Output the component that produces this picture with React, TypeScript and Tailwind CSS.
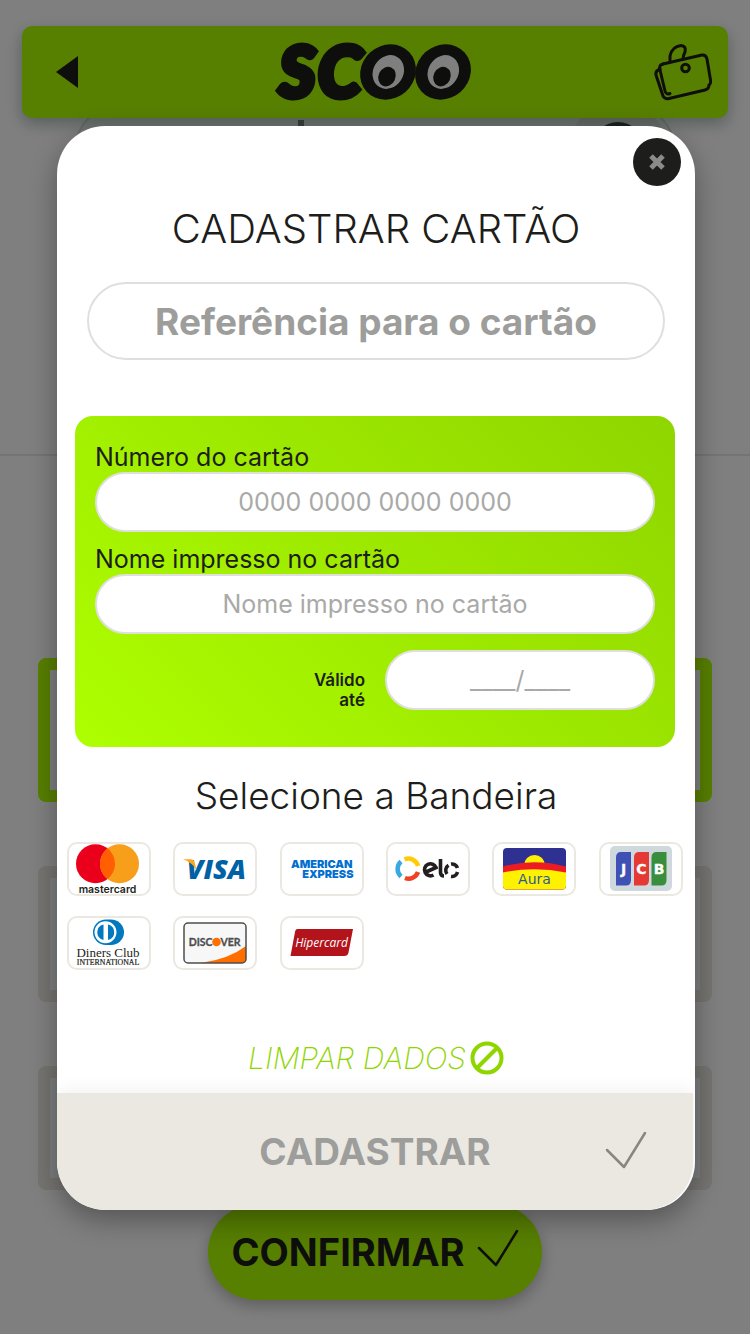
import type { ReactNode } from "react";

const sans = "font-['Inter','Liberation_Sans',sans-serif]";

function ScooLogo() {
  return (
    <svg viewBox="0 -14 200 92" className="h-[92px] w-[200px]" role="img" aria-label="SCOO">
      <g fill="#1d1d1b" fontFamily="Lato, sans-serif" fontWeight="900" fontStyle="italic" fontSize="70" stroke="#1d1d1b" strokeWidth="6">
        <text x="5" y="57">S</text>
        <text x="44" y="57">C</text>
      </g>
      <ellipse cx="114" cy="32" rx="29" ry="26.500" transform="rotate(-42 114 32)" fill="#1d1d1b" />
      <ellipse cx="169" cy="32" rx="29" ry="26.500" transform="rotate(-42 169 32)" fill="#1d1d1b" />
      <ellipse cx="114.300" cy="32" rx="17.500" ry="15" transform="rotate(-58 114.300 32)" fill="#fff" />
      <ellipse cx="169.300" cy="32" rx="17.500" ry="15" transform="rotate(-58 169.300 32)" fill="#fff" />
      <ellipse cx="113" cy="36.600" rx="10" ry="8.500" transform="rotate(-65 113 36.600)" fill="#1d1d1b" />
      <ellipse cx="168" cy="36.600" rx="10" ry="8.500" transform="rotate(-65 168 36.600)" fill="#1d1d1b" />
    </svg>
  );
}

function WalletIcon() {
  return (
    <svg viewBox="0 0 60 60" className="h-15 w-15" fill="none" stroke="#1d1d1b" strokeWidth="3" strokeLinecap="round" strokeLinejoin="round" aria-hidden="true">
      <path d="M11 22 50 13Q54 12.500 55 17L58.500 38Q59 42 57 43M57 43Q57 47 53 48L17 56.500Q13 57.500 11 54L4 33Q3 29 8 27" />
      <path d="M11 22Q6.500 23 8 28L13 49Q14 53 18 51.500" />
      <path d="M18 20V14Q20 4.500 29 3.500Q34.500 4 33 10Q31 14 31 17" />
      <circle cx="33.500" cy="26" r="3.800" />
    </svg>
  );
}

function Check({ className }: { className: string }) {
  return (
    <svg viewBox="0 0 42 38" className={className} fill="none" stroke="currentColor" strokeWidth="2.500" strokeLinecap="round" strokeLinejoin="round" aria-hidden="true">
      <path d="M2 19 19 36 40 2" />
    </svg>
  );
}

const brands: { id: string; art: ReactNode }[] = [
  {
    id: "Mastercard",
    art: (
      <>
        <circle cx="28.500" cy="21.700" r="19.500" fill="#eb001b" />
        <circle cx="52.500" cy="21.700" r="19.500" fill="#f79e1b" />
        <path d="M40.500 6.300a19.500 19.500 0 0 1 0 30.800a19.500 19.500 0 0 1 0-30.800Z" fill="#ff5f00" />
        <text x="40.500" y="50.500" textAnchor="middle" fontSize="10.500" fontWeight="600" fontFamily="Inter, sans-serif" fill="#231f20">mastercard</text>
      </>
    ),
  },
  {
    id: "Visa",
    art: (
      <>
        <text x="73" y="37" textAnchor="end" fontSize="27" fontWeight="800" fontStyle="italic" fontFamily="'Open Sans', sans-serif" fill="#0061a5">VISA</text>
        <path d="M10 17.300H18Q21 17.500 21.500 20L23.500 28Q19 20.500 10 17.300Z" fill="#f9a81d" />
      </>
    ),
  },
  {
    id: "American Express",
    art: (
      <g fontSize="11" fontWeight="900" fontFamily="Inter, sans-serif" fill="#016fd0">
        <text x="72.500" y="25.500" textAnchor="end">AMERICAN</text>
        <text x="73.500" y="35.500" textAnchor="end">EXPRESS</text>
      </g>
    ),
  },
  {
    id: "Elo",
    art: (
      <>
        <g fill="none" strokeWidth="4.500">
          <path d="M18.500 17.400A10 10 0 0 1 32 24" stroke="#ffcb05" />
          <path d="M32 30A10 10 0 0 1 19 36" stroke="#ef4123" />
          <path d="M15 34.500A10 10 0 0 1 15 19.500" stroke="#38a8e0" />
        </g>
        <g fill="none" stroke="#231f20" strokeWidth="3.600">
          <path d="M39 30.500 50 25.500A6 6 0 1 0 47.500 33" />
          <path d="M54.500 17V31Q55 34 58 34" />
          <path d="M61 32A6 6 0 0 1 62.500 23.200M65 22A6 6 0 0 1 71.500 26M71.500 30A6 6 0 0 1 65 34.500" />
        </g>
      </>
    ),
  },
  {
    id: "Aura",
    art: (
      <>
        <clipPath id="aura-card"><rect x="11" y="6" width="63" height="41.500" rx="4" /></clipPath>
        <g clipPath="url(#aura-card)">
          <rect x="11" y="6" width="63" height="42" fill="#2e3192" />
          <circle cx="42.500" cy="23.500" r="10.500" fill="#fff200" />
          <path d="M11 24.500Q42 16 74 24.500V48H11Z" fill="#ed1c24" />
          <path d="M11 30.500Q42 24 74 30.500V48H11Z" fill="#fff200" />
        </g>
        <text x="42.500" y="41.500" textAnchor="middle" fontSize="14" fontFamily="'DejaVu Sans', sans-serif" fill="#2e5a9a">Aura</text>
      </>
    ),
  },
  {
    id: "JCB",
    art: (
      <>
        <rect x="11" y="4" width="62" height="45" rx="5" fill="#cfd8dc" />
        <path d="M22 10h10v28q0 5.500-5 5.500H17V15.500q0-5.500 5-5.500Z" fill="#3f51b5" />
        <path d="M40 10h10v28q0 5.500-5 5.500H35V15.500q0-5.500 5-5.500Z" fill="#e53935" />
        <path d="M57.500 10h10v28q0 5.500-5 5.500H52.500V15.500q0-5.500 5-5.500Z" fill="#388e3c" />
        <g fill="#fff" fontSize="14" fontWeight="700" fontFamily="'DejaVu Sans', sans-serif" textAnchor="middle" stroke="#fff" strokeWidth=".3">
          <text x="24.500" y="32">J</text>
          <text x="42.500" y="32">C</text>
          <text x="60" y="32">B</text>
        </g>
      </>
    ),
  },
  {
    id: "Diners Club",
    art: (
      <>
        <path d="M39 3.500h5a13 12.800 0 0 1 0 25.600h-5a13 12.800 0 0 1 0-25.600Z" fill="#0079be" />
        <circle cx="38.500" cy="16.300" r="11" fill="#fff" />
        <path d="M36.500 8.500a8 8 0 0 0 0 15.600ZM41 8.500a8 8 0 0 1 0 15.600Z" fill="#0079be" />
        <g fill="#231f20" fontFamily="'Liberation Serif', serif" textAnchor="middle">
          <text x="41" y="41" fontSize="13">Diners Club</text>
          <text x="41" y="49" fontSize="7.800" stroke="#231f20" strokeWidth=".2">INTERNATIONAL</text>
        </g>
      </>
    ),
  },
  {
    id: "Discover",
    art: (
      <>
        <clipPath id="discover-card"><rect x="11" y="7" width="62" height="40" rx="4" /></clipPath>
        <rect x="11" y="7" width="62" height="40" rx="4" fill="#f7f7f7" />
        <path clipPath="url(#discover-card)" d="M28 47Q56 43 73 30V47Z" fill="#ff6f00" />
        <rect x="11" y="7" width="62" height="40" rx="4" fill="none" stroke="#4d4d4f" strokeWidth="1.500" />
        <circle cx="43.500" cy="26" r="4.300" fill="#ff6f00" />
        <g fill="#4d4d4f" fontFamily="Lato, sans-serif" fontWeight="700" fontSize="10.500" stroke="#4d4d4f" strokeWidth=".3">
          <text x="39.500" y="30" textAnchor="end">DISC</text>
          <text x="47.500" y="30">VER</text>
        </g>
      </>
    ),
  },
  {
    id: "Hipercard",
    art: (
      <>
        <path d="M17.500 13H73L68.500 36.500Q68 40 64 40H10.500L15 16Q15.500 13 17.500 13Z" fill="#b3131b" />
        <text x="41.500" y="30.500" textAnchor="middle" fontSize="12" fontStyle="italic" fontFamily="'Open Sans', sans-serif" fill="#fff">Hipercard</text>
      </>
    ),
  },
];

function BackgroundPage() {
  return (
    <div className="flex min-h-[1334px] flex-col bg-white pt-[26px]">
      <header className="z-10 mx-[22px] flex h-[92px] items-center justify-between rounded-[10px] bg-[#aeff00] pr-4 pl-[34px] shadow-[0_6px_16px_#0b3b2455]">
        <button type="button" aria-label="Voltar" className="flex w-10">
          <svg viewBox="0 0 22 32" className="h-8 w-[22px]" fill="#1d1d1b" aria-hidden="true"><path d="M22 0V32L0 16Z" /></svg>
        </button>
        <ScooLogo />
        <button type="button" aria-label="Carteira"><WalletIcon /></button>
      </header>
      <div className="mx-[75px] -mt-[13px] flex h-[86px] items-start justify-end rounded-full border-2 border-[#dde2dd] bg-[#f2faf5]">
        <span className="mt-[13px] mr-[267px] h-8 w-1.5 bg-[#7c877c]" />
        <span className="mr-2 flex h-[82px] w-[94px] items-center justify-center rounded-[36px] bg-[#e4e9e2]">
          <span className="h-[52px] w-[52px] rounded-full bg-[#38443f]" />
        </span>
      </div>
      <hr className="mt-[263px] border-t-2 border-[#ebe8e1]" />
      <div className="mx-[38px] mt-[202px] flex flex-col gap-16">
        <section className="h-36 rounded-lg border-12 border-[#aeff00] bg-[#fafcff]" />
        <section className="h-[136px] rounded-lg border-12 border-[#ebe8e1] bg-[#fafcff]" />
        <section className="h-[124px] rounded-lg border-12 border-[#ebe8e1] bg-[#fafcff]" />
      </div>
      <button type="button" className="mx-auto mt-3.5 mb-8 flex h-24 w-[334px] items-center justify-center gap-3 rounded-[48px] bg-[#aeff00] text-[38px] font-bold text-[#1d1d1b] shadow-[0_6px_16px_#0004]">
        CONFIRMAR
        <Check className="mb-2 h-[38px] w-[42px]" />
      </button>
    </div>
  );
}

const field = "block w-full rounded-full border-2 border-[#dfdfdd] bg-white text-center text-[#1d1d1b] outline-none";

export default function App() {
  return (
    <main className={`relative overflow-hidden ${sans}`}>
      <BackgroundPage />
      <div className="absolute inset-0 z-20 bg-black/50 pt-[126px] pr-[55px] pl-[57px]">
        <form role="dialog" aria-label="Cadastrar cartão" className="relative flex flex-col overflow-hidden rounded-[48px] bg-white text-[#1d1d1b] shadow-[0_10px_28px_#0005]">
          <button type="button" aria-label="Fechar" className="absolute top-3 right-3.5 flex h-12 w-12 items-center justify-center rounded-full bg-[#1d1d1b]">
            <svg viewBox="0 0 16 16" className="h-4 w-4" stroke="#8b8b8a" strokeWidth="5" aria-hidden="true"><path d="m2 2 12 12M14 2 2 14" /></svg>
          </button>
          <h1 className="mt-[79px] text-center text-[40px] leading-12 font-light">CADASTRAR CARTÃO</h1>
          <div className="mt-[29px] px-[30px]">
            <input aria-label="Referência para o cartão" placeholder="Referência para o cartão" className={`${field} h-[78px] text-[37px] font-bold placeholder:text-[#9d9d9c]`} />
          </div>
          <div className="mt-14 mr-5 ml-[18px] rounded-[18px] bg-linear-45 from-[#aeff00] to-[#8fd500] px-5 pt-[26px] pb-[37px]">
            <label htmlFor="numero" className="block text-[25px] leading-[30px]">Número do cartão</label>
            <input id="numero" placeholder="0000 0000 0000 0000" className={`${field} h-15 text-[25px] placeholder:text-[#a9a9a7]`} />
            <label htmlFor="nome" className="mt-3 block text-[25px] leading-[30px]">Nome impresso no cartão</label>
            <input id="nome" placeholder="Nome impresso no cartão" className={`${field} h-15 text-[25px] placeholder:text-[#a9a9a7]`} />
            <div className="mt-4 flex items-center justify-end gap-5">
              <label htmlFor="validade" className="mt-5 w-16 text-right text-[17px] leading-5 font-semibold">Válido até</label>
              <div className="w-[270px]">
                <input id="validade" placeholder="____/____" className={`${field} h-15 text-[25px] placeholder:text-[#a9a9a7]`} />
              </div>
            </div>
          </div>
          <fieldset>
            <legend className="w-full pt-[25px] text-center text-[37px] leading-12 font-light">Selecione a Bandeira</legend>
            <div className="mt-[22px] grid grid-cols-6 gap-y-5">
              {brands.map(({ id, art }) => (
                <label key={id} className="flex cursor-pointer pl-2.5">
                  <input type="radio" name="bandeira" value={id} aria-label={id} className="sr-only" />
                  <span className="rounded-[10px] border-2 border-[#ebe8e1]">
                    <svg viewBox="0 0 84 54" className="-m-0.5 h-[54px] w-[84px]" aria-hidden="true">{art}</svg>
                  </span>
                </label>
              ))}
            </div>
          </fieldset>
          <button type="reset" className="mx-auto mt-[70px] flex h-9 items-center gap-1 text-[30px] font-extralight text-[#8fd500] italic">
            LIMPAR DADOS
            <svg viewBox="0 0 34 34" className="h-[34px] w-[34px]" fill="none" stroke="#8fd500" strokeWidth="4" aria-hidden="true">
              <circle cx="17" cy="17" r="14.500" /><path d="M7 27 27 7" />
            </svg>
          </button>
          <button type="submit" className="mt-[17px] mr-0.5 grid h-[117px] grid-cols-[1fr_auto_1fr] items-center rounded-b-[48px] bg-[#ebe8e1] text-[37px] font-bold text-[#9d9d9c] shadow-[0_-4px_16px_#0000000d]">
            <span className="col-start-2">CADASTRAR</span>
            <Check className="mr-[46px] mb-1 h-[38px] w-[42px] justify-self-end text-[#878683]" />
          </button>
        </form>
      </div>
    </main>
  );
}
